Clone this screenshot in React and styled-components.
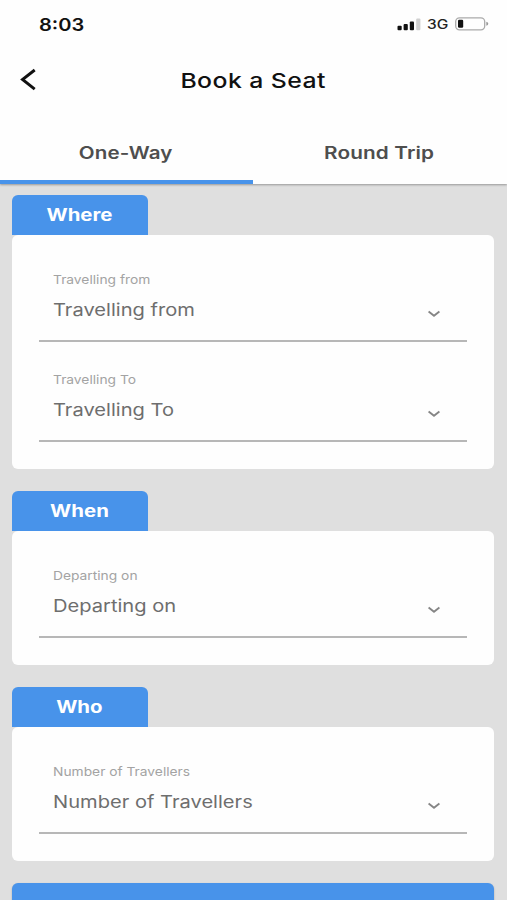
import React from "react";
import styled, { createGlobalStyle } from "styled-components";

const GlobalStyle = createGlobalStyle`
  * { box-sizing: border-box; }
  html, body { margin: 0; height: 100%; overflow: hidden; background: #dfdfdf; }
  body { font-family: Inter, "Liberation Sans", sans-serif; }
`;

const Screen = styled.div`
  width: 507px;
  height: 900px;
  overflow: hidden;
  background: #dfdfdf;
`;

/* Wide type: every label is stretched horizontally from its anchor edge. */
const Wide = styled.span`
  display: inline-block;
  white-space: nowrap;
  transform: scaleX(${(p) => p.$stretch});
  transform-origin: ${(p) => p.$from || "center"} center;
`;

const Header = styled.header`
  position: relative;
  z-index: 1;
  height: 184px;
  background: #fefefe;
  box-shadow: 0 1px 2px rgba(0, 0, 0, 0.32);
`;

const StatusBar = styled.div`
  display: flex;
  justify-content: space-between;
  align-items: center;
  height: 48px;
  padding: 0 18px 0 39px;
`;

const Clock = styled.div`
  padding-top: 2px;
  font-size: 17px;
  font-weight: 600;
  line-height: 20px;
  color: #111;
`;

const Indicators = styled.div`
  display: flex;
  align-items: center;
`;

const Network = styled.div`
  width: 28px;
  margin: 2px 0 0 6px;
  font-size: 12.5px;
  font-weight: 500;
  line-height: 16px;
  color: #222;
`;

const TitleBar = styled.div`
  display: grid;
  grid-template-columns: 60px 1fr 60px;
  align-items: center;
  height: 64px;
`;

const BackButton = styled.button`
  display: flex;
  width: 60px;
  padding: 0 0 0 19px;
  border: 0;
  background: none;
`;

const Title = styled.h1`
  margin: 0;
  padding-top: 2px;
  text-align: center;
  font-size: 20.5px;
  font-weight: 500;
  line-height: 28px;
  letter-spacing: 0.35px;
  color: #111;
`;

const Tabs = styled.nav`
  display: grid;
  grid-template-columns: 252.5px 1fr;
  height: 72px;
`;

const Tab = styled.button`
  padding: 13px 2px 0 0;
  border: 0;
  border-bottom: 4.5px solid ${(p) => (p.$active ? "#4893ea" : "transparent")};
  background: none;
  font: 600 17px/24px Inter, sans-serif;
  letter-spacing: 0.1px;
  color: #4e4e4e;
`;

const Form = styled.main`
  display: flex;
  flex-direction: column;
  gap: 22.5px;
  padding: 11px 13px 0 12px;
`;

const Badge = styled.h2`
  width: 136px;
  height: 40px;
  margin: 0;
  padding-right: 2px;
  border-radius: 6px 6px 0 0;
  background: #4893ea;
  text-align: center;
  font-size: 17px;
  font-weight: 700;
  line-height: 40px;
  color: #fff;
`;

const Card = styled.div`
  padding: 7px 27px 26.5px;
  border-radius: 6px;
  background: #fefefe;
`;

const Field = styled.div`
  display: grid;
  grid-template-columns: 1fr 40px;
  grid-template-rows: 16px 24px;
  row-gap: 10px;
  height: 100px;
  padding: 30px 13px 0 14px;
  border-bottom: 2px solid #b7b7b7;
`;

const Caption = styled.div`
  grid-column: 1 / -1;
  font-size: 12px;
  line-height: 16px;
  color: #a3a3a3;
`;

const Value = styled.div`
  font-size: 17.2px;
  line-height: 24px;
  color: #6e6e6e;
`;

const Chevron = styled.svg`
  justify-self: center;
  align-self: center;
  margin-top: 7px;
`;

const Submit = styled.button`
  height: 60px;
  border: 0;
  border-radius: 6px;
  background: #4893ea;
  box-shadow: 0 1px 2px rgba(0, 0, 0, 0.25);
`;

const sections = [
  { title: "Where", fields: ["Travelling from", "Travelling To"] },
  { title: "When", fields: ["Departing on"] },
  { title: "Who", fields: ["Number of Travellers"] },
];

function SelectField({ label }) {
  return (
    <Field>
      <Caption><Wide $stretch={1.15} $from="left">{label}</Wide></Caption>
      <Value><Wide $stretch={1.17} $from="left">{label}</Wide></Value>
      <Chevron width="14" height="8" viewBox="0 0 14 8" fill="none">
        <path d="M1.6 1.6 7 5.7l5.4-4.1" stroke="#858585" strokeWidth="1.9" />
      </Chevron>
    </Field>
  );
}

function Signal() {
  return (
    <svg width="24" height="13" viewBox="0 0 24 13">
      <rect x="0.5" y="7.8" width="4.2" height="4.4" rx="1" fill="#111" />
      <rect x="6.6" y="5.9" width="4.2" height="6.3" rx="1" fill="#111" />
      <rect x="12.8" y="3.4" width="4.2" height="8.8" rx="1" fill="#111" />
      <rect x="19.2" y="0.4" width="4.2" height="11.8" rx="1" fill="#d0d0d0" />
    </svg>
  );
}

function Battery() {
  return (
    <svg width="34" height="14" viewBox="0 0 34 14">
      <rect x="0.7" y="0.8" width="29" height="12" rx="3.8" fill="none" stroke="#aaa" strokeWidth="1.3" />
      <rect x="3" y="2.8" width="5.2" height="8" rx="1.2" fill="#111" />
      <path d="M31.3 4.8q2 .4 2 2t-2 2z" fill="#999" />
    </svg>
  );
}

export default function App() {
  return (
    <Screen>
      <GlobalStyle />
      <Header>
        <StatusBar>
          <Clock><Wide $stretch={1.18} $from="left">8:03</Wide></Clock>
          <Indicators>
            <Signal />
            <Network><Wide $stretch={1.24} $from="left">3G</Wide></Network>
            <Battery />
          </Indicators>
        </StatusBar>
        <TitleBar>
          <BackButton aria-label="Back">
            <svg width="18" height="24" viewBox="0 0 18 24" fill="none">
              <path d="M15.7 2 3.5 11.5l12.2 9.7" stroke="#111" strokeWidth="2.9" />
            </svg>
          </BackButton>
          <Title><Wide $stretch={1.21}>Book a Seat</Wide></Title>
        </TitleBar>
        <Tabs>
          <Tab $active><Wide $stretch={1.21}>One-Way</Wide></Tab>
          <Tab><Wide $stretch={1.22}>Round Trip</Wide></Tab>
        </Tabs>
      </Header>
      <Form>
        {sections.map((s) => (
          <section key={s.title}>
            <Badge><Wide $stretch={1.2}>{s.title}</Wide></Badge>
            <Card>
              {s.fields.map((f) => <SelectField key={f} label={f} />)}
            </Card>
          </section>
        ))}
        <Submit aria-label="Search" />
      </Form>
    </Screen>
  );
}
